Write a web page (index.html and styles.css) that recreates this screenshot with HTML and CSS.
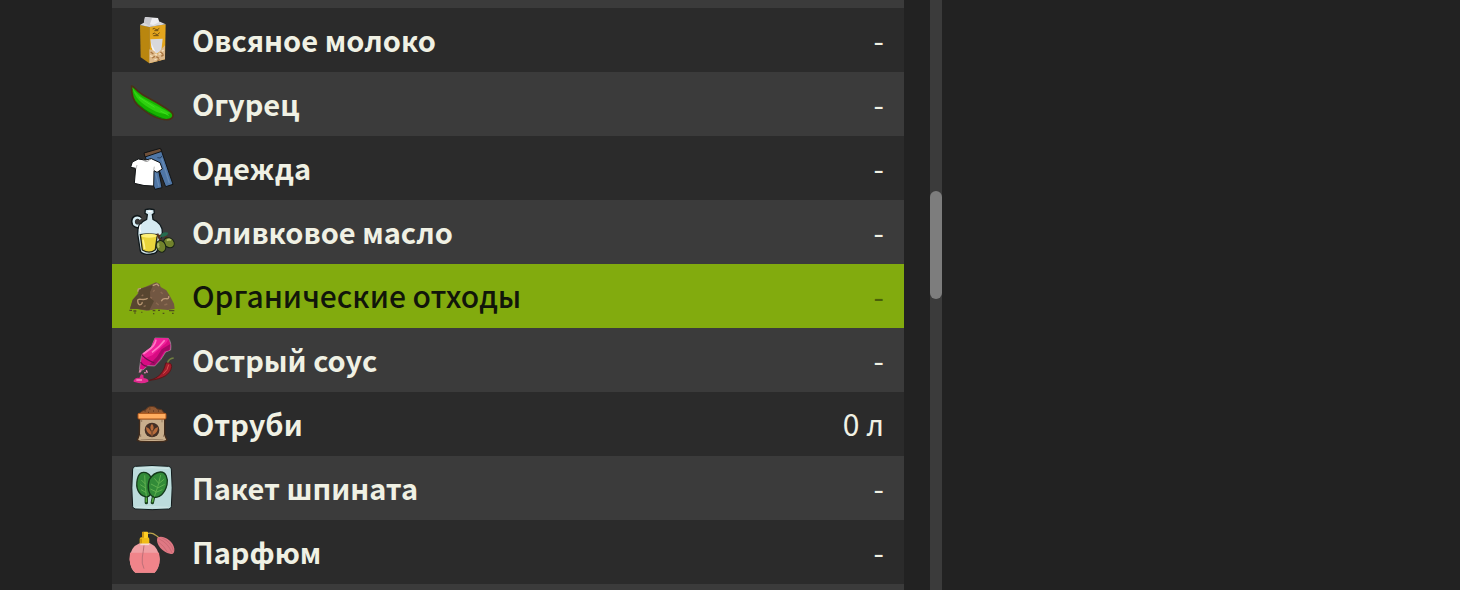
FILE: index.html
```html
<!DOCTYPE html>
<html lang="ru">
<head>
    <meta charset="UTF-8">
    <meta name="viewport" content="width=device-width, initial-scale=1.0">
    <title>Склад</title>
    <link rel="stylesheet" href="styles.css">
</head>
<body>
    <main class="storage">
        <ul class="goods">
            <li class="edge"></li>
            <li class="row">
                <svg class="icon" viewBox="0 0 192 192" aria-hidden="true">
                    <path d="M60 51 88 56V166L62 148Z" fill="#b9860f"/>
                    <path d="M88 56 137 49 135 154 88 166Z" fill="#e3a51d"/>
                    <path d="M60 51 76 41 120 41 137 49 88 57Z" fill="#d9d9dc"/>
                    <path d="M75 27 114 30 118 42 100 51 72 43Z" fill="#eeeef1"/>
                    <path d="M75 27 96 31 88 54 72 44Z" fill="#c9c9cf"/>
                    <path d="M98 63q6-4 9 1t11-3M98 78q5-6 9 0t12-4M103 68h12M100 83h16" fill="none" stroke="#6e4d12" stroke-width="3"/>
                    <path d="M91 94 128 92 124 128 108 138 94 118Z" fill="#d8d8dc"/>
                    <path d="M93 104 108 135 100 140Z" fill="#f6f6f6"/>
                    <path d="M88 124 102 128 111 139 125 122 135 112V154L88 166Z" fill="#dcb88a"/>
                    <path d="M92 132l8 6M96 150l9-5M109 146l8 5M121 132l8 6M124 145l7-5M112 158l7-3" stroke="#a87540" stroke-width="4"/>
                    <path d="M90 143l8 3M104 139l7 2M116 139l7-3M103 156l7-3M126 130l5-4" stroke="#f6dfba" stroke-width="4"/>
                </svg>
                <span class="name">Овсяное молоко</span>
                <span class="amount">-</span>
            </li>
            <li class="row">
                <svg class="icon" viewBox="0 0 192 192" aria-hidden="true">
                    <path d="M35 42C42 42 49 57 65 66 86 80 111 90 133 106 146 114 159 119 159 130 159 143 141 146 124 141 97 134 70 115 52 98 35 81 34 62 35 42Z" fill="#17b300" stroke="#4c3017" stroke-width="5"/>
                    <path d="M37 45C44 59 56 71 77 83 106 99 126 110 153 124 139 129 119 125 97 113 65 95 43 78 37 45Z" fill="#2ed00f"/>
                    <path d="M43 80C62 108 103 131 137 140 113 142 65 116 43 80Z" fill="#087d08"/>
                    <path d="M57 76 104 106M121 117 146 130" stroke="#3fe01c" stroke-width="3"/>
                </svg>
                <span class="name">Огурец</span>
                <span class="amount">-</span>
            </li>
            <li class="row">
                <svg class="icon" viewBox="0 0 192 192" aria-hidden="true">
                    <g stroke="#111416" stroke-width="3" stroke-linejoin="round">
                        <path d="M74 51 122 38 159 145 137 152 114 94 126 155 105 160 89 121Z" fill="#4f76a6"/>
                        <path d="M72 51 121 37 125 46 75 63Z" fill="#705039"/>
                        <path d="M55 69Q76 76 94 68L120 80 127 99 111 109 102 104 101 150Q72 151 43 142L47 97 32 94 37 78Z" fill="#fff"/>
                        <path d="M69 72Q82 82 91 69" fill="none" stroke="#9b9b9b"/>
                    </g>
                    <path d="M112 65q10 5 15-6" stroke="#263f5f" stroke-width="3" fill="none"/>
                    <path d="M125 67 148 141M107 112l10 40" stroke="#668ab5" stroke-width="4"/>
                    <path d="M48 98 51 87M101 103 103 92" stroke="#bbb" stroke-width="3"/>
                </svg>
                <span class="name">Одежда</span>
                <span class="amount">-</span>
            </li>
            <li class="row">
                <svg class="icon" viewBox="0 0 192 192" aria-hidden="true">
                    <path d="M61 56C53 45 39 51 39 64S52 82 60 77" fill="none" stroke="#101719" stroke-width="12"/>
                    <path d="M62 58C53 48 41 54 41 65S51 79 60 76" fill="none" stroke="#d7edf4" stroke-width="7"/>
                    <path d="M76 29Q88 25 102 29L103 40 97 44 99 58Q128 70 127 98L111 154Q106 163 80 163 63 161 61 153L53 102Q50 70 80 58L82 44 75 40Z" fill="#d5eaf2" stroke="#10191c" stroke-width="4"/>
                    <path d="M61 104Q85 100 112 104L106 149Q89 163 67 150Z" fill="#ead53c" stroke="#282b16" stroke-width="4"/>
                    <ellipse cx="87" cy="107" rx="24" ry="6" fill="#fff078"/>
                    <path d="M69 119q4 17 5 28" stroke="#fff38a" stroke-width="5" fill="none"/>
                    <path d="M62 74Q56 84 62 97M84 35h11" stroke="#fff" stroke-width="4" fill="none"/>
                    <path d="M112 101Q117 117 126 126M116 109Q131 98 143 117" fill="none" stroke="#55311e" stroke-width="6"/>
                    <path d="M120 111Q125 93 145 98 141 112 120 111Z" fill="#246b4f"/>
                    <ellipse cx="147" cy="128" rx="14" ry="17" fill="#71822c" stroke="#172215" stroke-width="3" transform="rotate(-55 147 128)"/>
                    <ellipse cx="123" cy="139" rx="14" ry="18" fill="#71822c" stroke="#172215" stroke-width="3" transform="rotate(-20 123 139)"/>
                    <path d="M116 130q-4 7 1 13M141 122q6-6 12-1" stroke="#b2bd66" stroke-width="6" fill="none"/>
                </svg>
                <span class="name">Оливковое масло</span>
                <span class="amount">-</span>
            </li>
            <li class="row selected">
                <svg class="icon" viewBox="0 0 192 192" aria-hidden="true">
                    <path d="M30 134 38 107 53 89 56 76 77 68 96 60 108 55 119 60 122 69 139 79 151 98 162 119 164 134 144 138 111 135 80 140 53 135Z" fill="#725742"/>
                    <path d="M30 134 38 107 55 89 58 76 100 62 90 84 91 103 102 111 88 139 53 135Z" fill="#584630"/>
                    <path d="M55 119C46 94 70 114 83 103M55 119C59 126 69 119 66 114" fill="none" stroke="#b99873" stroke-width="4"/>
                    <path d="M124 112q4-10 14-8t8-8M98 65l13-5 6 6M53 83l2-8 8-2" fill="none" stroke="#bc9b79" stroke-width="4"/>
                    <path d="M99 83l5-5M91 99l5 4M108 116l8 7M122 84l6 5M133 123l9-3M65 96l5-4M71 128l6-3" stroke="#8b6b51" stroke-width="4"/>
                    <path d="M28 139h8M40 141h9M43 147h4M64 145h3M98 140h8M99 149h4M114 139h6M128 148h5M147 140h16M156 148h5" stroke="#51501d" stroke-width="4"/>
                </svg>
                <span class="name">Органические отходы</span>
                <span class="amount">-</span>
            </li>
            <li class="row">
                <svg class="icon" viewBox="0 0 192 192" aria-hidden="true">
                    <path d="M105 30 145 31Q155 42 152 66L137 72 123 94 104 114 83 113 69 126 58 124 61 103 65 80 94 57Z" fill="#d90b83" stroke="#a4a0a4" stroke-width="2"/>
                    <path d="M105 30 145 31Q145 42 128 54L97 82 68 93 66 78 94 57Z" fill="#f0209a"/>
                    <path d="M108 35Q106 54 82 69L70 78M134 37Q120 56 96 73" stroke="#ff77c4" stroke-width="5" fill="none"/>
                    <path d="M151 48 148 67 133 70 119 92 104 112 88 110 111 86 125 64Z" fill="#a70867"/>
                    <path d="M65 80Q79 96 103 105M62 102Q68 114 82 115" fill="none" stroke="#73104e" stroke-width="4"/>
                    <path d="M58 125 66 124 63 133 56 134Z" fill="#d783a8"/>
                    <path d="M42 156Q48 147 58 150L63 139 70 141 71 150Q87 152 85 161 66 170 47 163Q37 162 42 156Z" fill="#df288e"/>
                    <path d="M49 156h17M79 127l3 7M74 132l2 4" stroke="#ff8fc5" stroke-width="4"/>
                    <path d="M137 105Q155 101 155 116C152 139 129 153 88 157 119 149 132 131 137 105Z" fill="#a31b2a" stroke="#571819" stroke-width="3"/>
                    <path d="M146 110Q144 126 130 137" stroke="#d8514d" stroke-width="3" fill="none"/>
                    <path d="M143 104Q146 92 161 90" stroke="#718040" stroke-width="5" fill="none"/>
                </svg>
                <span class="name">Острый соус</span>
                <span class="amount">-</span>
            </li>
            <li class="row">
                <svg class="icon" viewBox="0 0 192 192" aria-hidden="true">
                    <path d="M58 65Q64 56 77 53 85 43 96 43 107 44 112 51L125 53 134 65Z" fill="#925932" stroke="#5d371f" stroke-width="3"/>
                    <path d="M74 57h3M88 51h3M99 57h3M114 57h3M84 61h3" stroke="#4e2d1b" stroke-width="3"/>
                    <path d="M59 80 134 80 134 128 141 145 129 149 63 149 52 145 58 128Z" fill="#c8ae8c" stroke="#412b1b" stroke-width="4"/>
                    <path d="M62 144q34-4 68 0M65 82v8M126 82v9M62 127v8M131 128v7" stroke="#947b60" stroke-width="3" fill="none"/>
                    <rect x="54" y="64" width="84" height="17" rx="3" fill="#ffad60" stroke="#a95218" stroke-width="3"/>
                    <circle cx="96" cy="114" r="22" fill="#443026"/>
                    <path d="M96 95q-10 11 0 23 10-11 0-23ZM78 105q0 18 16 24 2-17-16-24ZM114 105q0 18-16 24-2-17 16-24Z" fill="#b66b3b"/>
                    <path d="M96 117v16" stroke="#b66b3b" stroke-width="3"/>
                </svg>
                <span class="name">Отруби</span>
                <span class="amount">0 л</span>
            </li>
            <li class="row">
                <svg class="icon" viewBox="0 0 192 192" aria-hidden="true">
                    <path d="M46 31Q96 26 146 31 153 32 154 39 159 96 154 152 153 158 146 159 96 163 47 159 39 158 38 152 33 96 38 39 39 32 46 31Z" fill="#bcdcdc" stroke="#11191a" stroke-width="3"/>
                    <path d="M47 37Q96 33 146 37M48 154Q96 151 145 154" stroke="#d3e9e8" stroke-width="3" fill="none"/>
                    <path d="M79 119V140M102 115 97 140" stroke="#173e1a" stroke-width="10" stroke-linecap="round"/>
                    <path d="M79 119V139M102 115 97 139" stroke="#58ad45" stroke-width="5"/>
                    <path d="M70 49C90 48 99 70 97 91 97 113 87 126 76 122 56 117 46 96 52 70Q56 50 70 49Z" fill="#328b38" stroke="#143a1b" stroke-width="4"/>
                    <path d="M121 48C137 47 145 66 141 86 135 112 117 128 102 123 86 118 80 94 88 71Q100 50 121 48Z" fill="#328b38" stroke="#143a1b" stroke-width="4"/>
                    <path d="M74 58Q75 92 79 121M76 84 64 72M78 97 61 86M79 110 63 101M122 57Q115 92 103 122M116 82 103 67M112 94 93 84M108 107 91 99M117 82 133 69M113 96 134 85M108 109 127 101" fill="none" stroke="#5fb04f" stroke-width="3"/>
                </svg>
                <span class="name">Пакет шпината</span>
                <span class="amount">-</span>
            </li>
            <li class="row">
                <svg class="icon" viewBox="0 0 192 192" aria-hidden="true">
                    <path d="M76 42Q96 36 106 45 114 49 119 57" fill="none" stroke="#bda54c" stroke-width="4"/>
                    <path d="M60 69Q28 82 29 119 31 147 46 158L104 158Q119 143 119 117 116 81 89 69Z" fill="#efa0a4"/>
                    <path d="M30 98H117Q125 134 104 158H46Q24 137 30 98Z" fill="#f0848a"/>
                    <path d="M72 76Q70 94 67 111 64 130 72 146" fill="none" stroke="#bd7078" stroke-width="3"/>
                    <rect x="59" y="52" width="29" height="20" rx="5" fill="#f1bd17"/>
                    <rect x="66" y="35" width="18" height="19" rx="2" fill="#ffcf24"/>
                    <path d="M66 36h6v17h-6M60 56h6v15h-5" fill="#cd9710"/>
                    <path d="M61 73h27" stroke="#f7d7d0" stroke-width="5"/>
                    <path d="M112 53C127 43 160 61 163 86 164 98 160 104 150 101 128 97 106 72 112 53Z" fill="#df7883"/>
                    <path d="M116 56Q145 69 156 99M114 65Q132 77 143 97M125 53Q154 66 160 92" fill="none" stroke="#cb6b76" stroke-width="3"/>
                </svg>
                <span class="name">Парфюм</span>
                <span class="amount">-</span>
            </li>
            <li class="edge edge-bottom"></li>
        </ul>
        <div class="scrollbar">
            <div class="thumb"></div>
        </div>
    </main>
</body>
</html>
```
FILE: styles.css
```css
:root {
    --page: #222222;
    --row-dark: #2b2b2b;
    --row-light: #3b3b3b;
    --accent: #82ab0e;
    --text: #f0f1e4;
}

* {
    margin: 0;
    padding: 0;
    box-sizing: border-box;
}

body {
    background: var(--page);
    color: var(--text);
    font-family: "Noto Sans CJK JP", "Noto Sans", sans-serif;
    font-size: 30px;
    line-height: 40px;
}

.storage {
    display: flex;
    gap: 26px;
    height: 100vh;
    padding-left: 112px;
    overflow: hidden;
}

.goods {
    display: flex;
    flex-direction: column;
    flex: 0 1 792px;
    list-style: none;
}

/* neighbouring rows cut off by the scroll area */
.edge {
    flex: 0 0 8px;
    background: var(--row-light);
}

.edge-bottom {
    flex: 1 0 0;
}

.row {
    display: flex;
    align-items: center;
    flex: 0 0 64px;
    gap: 8px;
    padding: 0 20px 0 8px;
    background: var(--row-dark);
}

.row:nth-child(odd) {
    background: var(--row-light);
}

.row.selected {
    background: var(--accent);
    color: #11150a;
}

.icon {
    flex: none;
    width: 64px;
    height: 64px;
}

.name,
.amount {
    padding-bottom: 2px;
}

.name {
    flex: 1;
    font-size: 29px;
    font-weight: 700;
}

.selected .name {
    font-size: 30px;
    font-weight: 500;
}

.selected .amount {
    color: #496008;
}

.scrollbar {
    display: grid;
    grid-template-rows: 191fr 108fr 291fr;
    flex: 0 0 12px;
    background: var(--row-light);
}

.thumb {
    grid-row: 2;
    border-radius: 6px;
    background: #7d7d7d;
}
```
